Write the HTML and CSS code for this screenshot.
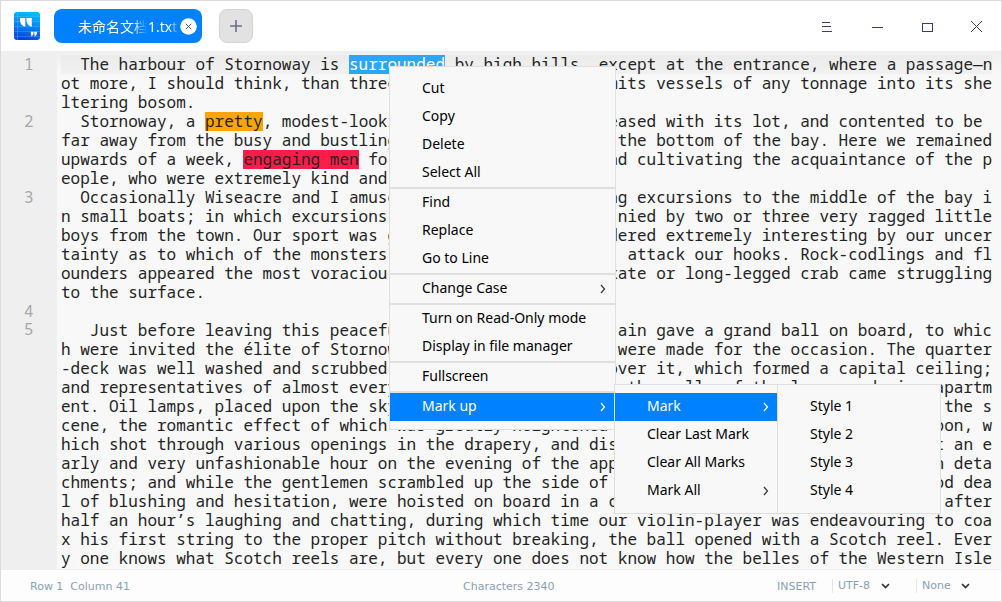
FILE: index.html
```
<!DOCTYPE html>
<html lang="en">
<head>
<meta charset="utf-8">
<title>Text Editor</title>
<link rel="stylesheet" href="styles.css">
</head>
<body>
<div class="window">
  <header class="titlebar">
    <svg class="logo" width="28" height="30" viewBox="0 0 28 30">
      <defs><linearGradient id="g" x1=".6" y1="0" x2=".4" y2="1"><stop offset="0" stop-color="#06bdfb"/><stop offset="0.5" stop-color="#0582f5"/><stop offset="1" stop-color="#0742dc"/></linearGradient></defs>
      <rect x="1" y="1" width="26" height="28" rx="3" fill="url(#g)"/>
      <path d="M1 5.500H27M1 10.500H27M1 15.500H27M1 20.500H27M1 25.500H27M4.500 1V29" stroke="#64cfff" stroke-opacity=".28" fill="none"/>
      <path d="M7 7h5.300v8.700Q7.500 14.500 7 10zM13.500 7h5.300v8.700Q14 14.500 13.500 10zM17.800 20.800h2.700v2.200L19 25.200h-1.200l.7-1.700h-.7zM21.200 20.800h2.700v2.200l-1.500 2.200h-1.200l.7-1.700h-.7z" fill="#fff"/>
    </svg>
    <div class="tab"><span class="tab-name"><span class="fade">未命名文档</span><span class="ext">1.txt</span></span>
      <svg class="tab-close" width="17" height="17" viewBox="0 0 17 17"><circle cx="8.500" cy="8.500" r="8.300" fill="#fff"/><path d="M5.800 5.800l5.400 5.400M11.200 5.800l-5.400 5.400" stroke="#46546f"/></svg>
    </div>
    <div class="add"><svg width="14" height="14" viewBox="0 0 14 14"><path d="M7 1v12M1 7h12" stroke="#66718a" stroke-width="1.600"/></svg></div>
    <svg class="controls" width="162" height="16" viewBox="0 0 162 16" fill="none" stroke="#34415f" shape-rendering="crispEdges">
      <path d="M1 4.500H9M1 8.500H10M1 13.500H11M51 9.500H62M101.500 5.500h10v8h-10z"/><path d="M150.500 3.500l10 10M160.500 3.500l-10 10" stroke-linecap="square"/>
    </svg>
  </header>
  <main class="editor">
    <div class="gutter"><b>1</b><i></i><i></i><b>2</b><i></i><i></i><i></i><b>3</b><i></i><i></i><i></i><i></i><i></i><b>4</b><b class="last">5</b></div>
    <div class="text">
<p class="current"><span>  The harbour of Stornoway is <mark class="sel">surrounded</mark> by high hills, except at the entrance, where a passage—n</span></p>
<p><span>ot more, I should think, than three</span><span>mits vessels of any tonnage into its she</span></p>
<p><span>ltering bosom.</span></p>
<p><span>  Stornoway, a <mark class="orange">pretty</mark>, modest-looki</span><span>eased with its lot, and contented to be </span></p>
<p><span>far away from the busy and bustling</span><span>the bottom of the bay. Here we remained</span></p>
<p><span>upwards of a week, <mark class="red">engaging men</mark> fo</span><span>nd cultivating the acquaintance of the p</span></p>
<p><span>eople, who were extremely kind and </span></p>
<p><span>  Occasionally Wiseacre and I amuse</span><span>ng excursions to the middle of the bay i</span></p>
<p><span>n small boats; in which excursions </span><span>nied by two or three very ragged little</span></p>
<p><span>boys from the town. Our sport was g</span><span>dered extremely interesting by our uncer</span></p>
<p><span>tainty as to which of the monsters </span><span>attack our hooks. Rock-codlings and fl</span></p>
<p><span>ounders appeared the most voracious</span><span>kate or long-legged crab came struggling</span></p>
<p><span>to the surface.</span></p>
<p></p>
<p><span>   Just before leaving this peacefu</span><span>ain gave a grand ball on board, to whic</span></p>
<p><span>h were invited the élite of Stornow</span><span>were made for the occasion. The quarter</span></p>
<p><span>-deck was well washed and scrubbed </span><span>over it, which formed a capital ceiling;</span></p>
<p><span>and representatives of almost every</span><span>the walls of the large and airy apartm</span></p>
<p><span>ent. Oil lamps, placed upon the sky</span><span>the s</span></p>
<p><span>cene, the romantic effect of which was greatly heightened</span><span>oon, w</span></p>
<p><span>hich shot through various openings in the drapery, and dis</span><span>t an e</span></p>
<p><span>arly and very unfashionable hour on the evening of the app</span><span>n deta</span></p>
<p><span>chments; and while the gentlemen scrambled up the side of </span><span>od dea</span></p>
<p><span>l of blushing and hesitation, were hoisted on board in a c</span><span>after</span></p>
<p><span>half an hour’s laughing and chatting, during which time our violin-player was endeavouring to coa</span></p>
<p><span>x his first string to the proper pitch without breaking, the ball opened with a Scotch reel. Ever</span></p>
<p><span>y one knows what Scotch reels are, but every one does not know how the belles of the Western Isle</span></p>
    </div>
  </main>
  <footer class="status">
    <span class="pos">Row 1&nbsp; Column 41</span><span class="chars">Characters 2340</span><span class="insert">INSERT</span>
    <span class="pick enc">UTF-8<svg width="9" height="6" viewBox="0 0 9 6"><path d="M1 1l3.500 3.500L8 1"/></svg></span>
    <span class="pick">None<svg width="9" height="6" viewBox="0 0 9 6"><path d="M1 1l3.500 3.500L8 1"/></svg></span>
  </footer>
</div>
<div class="menu main-menu">
  <div>Cut</div><div>Copy</div><div>Delete</div><div>Select All</div><hr>
  <div>Find</div><div>Replace</div><div>Go to Line</div><hr>
  <div class="sub">Change Case<svg width="6" height="10" viewBox="0 0 6 10"><path d="M1 1l3.500 4L1 9"/></svg></div><hr>
  <div>Turn on Read-Only mode</div><div>Display in file manager</div><hr>
  <div>Fullscreen</div><hr>
  <div class="sub on">Mark up<svg width="6" height="10" viewBox="0 0 6 10"><path d="M1 1l3.500 4L1 9"/></svg></div>
</div>
<div class="menu mark-menu">
  <div class="sub on">Mark<svg width="6" height="10" viewBox="0 0 6 10"><path d="M1 1l3.500 4L1 9"/></svg></div><div>Clear Last Mark</div><div>Clear All Marks</div>
  <div class="sub">Mark All<svg width="6" height="10" viewBox="0 0 6 10"><path d="M1 1l3.500 4L1 9"/></svg></div>
</div>
<div class="menu style-menu"><div>Style 1</div><div>Style 2</div><div>Style 3</div><div>Style 4</div></div>
</body>
</html>
```
FILE: styles.css
```
* { box-sizing: border-box; }
body { margin: 0; width: 1002px; height: 602px; overflow: hidden; font-family: "Noto Sans", "Noto Sans CJK SC", sans-serif; }
.window { width: 1002px; height: 602px; border: 1px solid #dcdcdc; display: flex; flex-direction: column; background: #fff; }
.titlebar { height: 50px; display: flex; align-items: center; padding: 0 18px 0 12px; flex: none; }
.tab { width: 148px; height: 34px; margin-left: 13px; border-radius: 8px; background: #0081ff; color: #fff; display: flex; align-items: center; padding: 0 5px 0 24px; font-size: 14px; }
.tab-name { width: 102px; white-space: nowrap; display: flex; line-height: 20px; padding-top: 1px; }
.fade { width: 70px; -webkit-mask-image: linear-gradient(90deg, #000 78%, transparent 99%); mask-image: linear-gradient(90deg, #000 78%, transparent 99%); }
.ext { -webkit-mask-image: linear-gradient(90deg, #000 70%, rgba(0,0,0,.2)); mask-image: linear-gradient(90deg, #000 70%, rgba(0,0,0,.2)); }
.tab-close { flex: none; }
.add { width: 34px; height: 34px; margin-left: 17px; border-radius: 8px; border: 1px solid #d4d4d4; background: #e2e2e2; display: flex; align-items: center; justify-content: center; }
.controls { margin-left: auto; }
.editor { height: 518px; flex: none; display: flex; background: linear-gradient(#efefef, #f8f8f8 22px); }
.gutter { width: 56px; background: #efefef; padding-top: 4px; font: 16px/19px "Noto Sans Mono", "DejaVu Sans Mono", monospace; color: #a8a8a8; }
.gutter b, .gutter i { display: block; height: 19px; font-weight: 400; padding-left: 23px; }
.gutter .last { margin-top: -1px; }
.text { width: 931.2px; margin-left: 4px; padding-top: 4px; font: 16px/19px "Noto Sans Mono", "DejaVu Sans Mono", monospace; color: #232323; }
.text p { margin: 0; height: 19px; display: flex; justify-content: space-between; white-space: pre; }
.current { background: linear-gradient(#ebebeb, #f1f1f1); }
mark { color: inherit; display: inline-block; height: 19px; }
.sel { background: #2ca7f8; color: #fff; }
.orange { background: #ffa503; }
.red { background: #ff1c49; }
.status { flex: 1; background: #fdfdfd; border-top: 1px solid #eee; display: flex; align-items: center; padding: 1px 26px 0 29px; font: 11px "DejaVu Sans", sans-serif; color: #8aa1b4; }
.pos { width: 433px; }
.chars { width: 314px; }
.insert { width: 55px; }
.pick { width: 84px; height: 14px; line-height: 14px; border-left: 1px solid #e6e6e6; padding-left: 5px; display: flex; align-items: center; justify-content: space-between; padding-right: 26px; }
.pick + .pick { width: 54px; padding-right: 0; flex: none; }
.pick svg { fill: none; stroke: #333; stroke-width: 1.700; flex: none; }
.enc { flex: none; }
.menu { position: absolute; background: #f8f8f8; border: 1px solid #dfdfdf; padding: 8px 0; font-size: 14px; color: #000; }
.menu div { height: 28px; line-height: 25px; padding-left: 32px; white-space: nowrap; }
.menu hr { border: 0; height: 2px; margin: 0; background: #dfdfdf; }
.menu .sub { display: flex; justify-content: space-between; padding-right: 9px; }
.mark-menu .sub { padding-right: 8px; }
.menu svg { fill: none; stroke: #333; stroke-width: 1.200; align-self: center; margin-bottom: 1px; }
.menu .on { background: #0081ff; color: #fff; }
.menu .on svg { stroke: #fff; }
.main-menu { left: 389px; top: 66px; width: 227px; height: 364px; }
.mark-menu { left: 614px; top: 384px; width: 164px; height: 130px; }
.style-menu { left: 777px; top: 384px; width: 164px; height: 130px; }
```
